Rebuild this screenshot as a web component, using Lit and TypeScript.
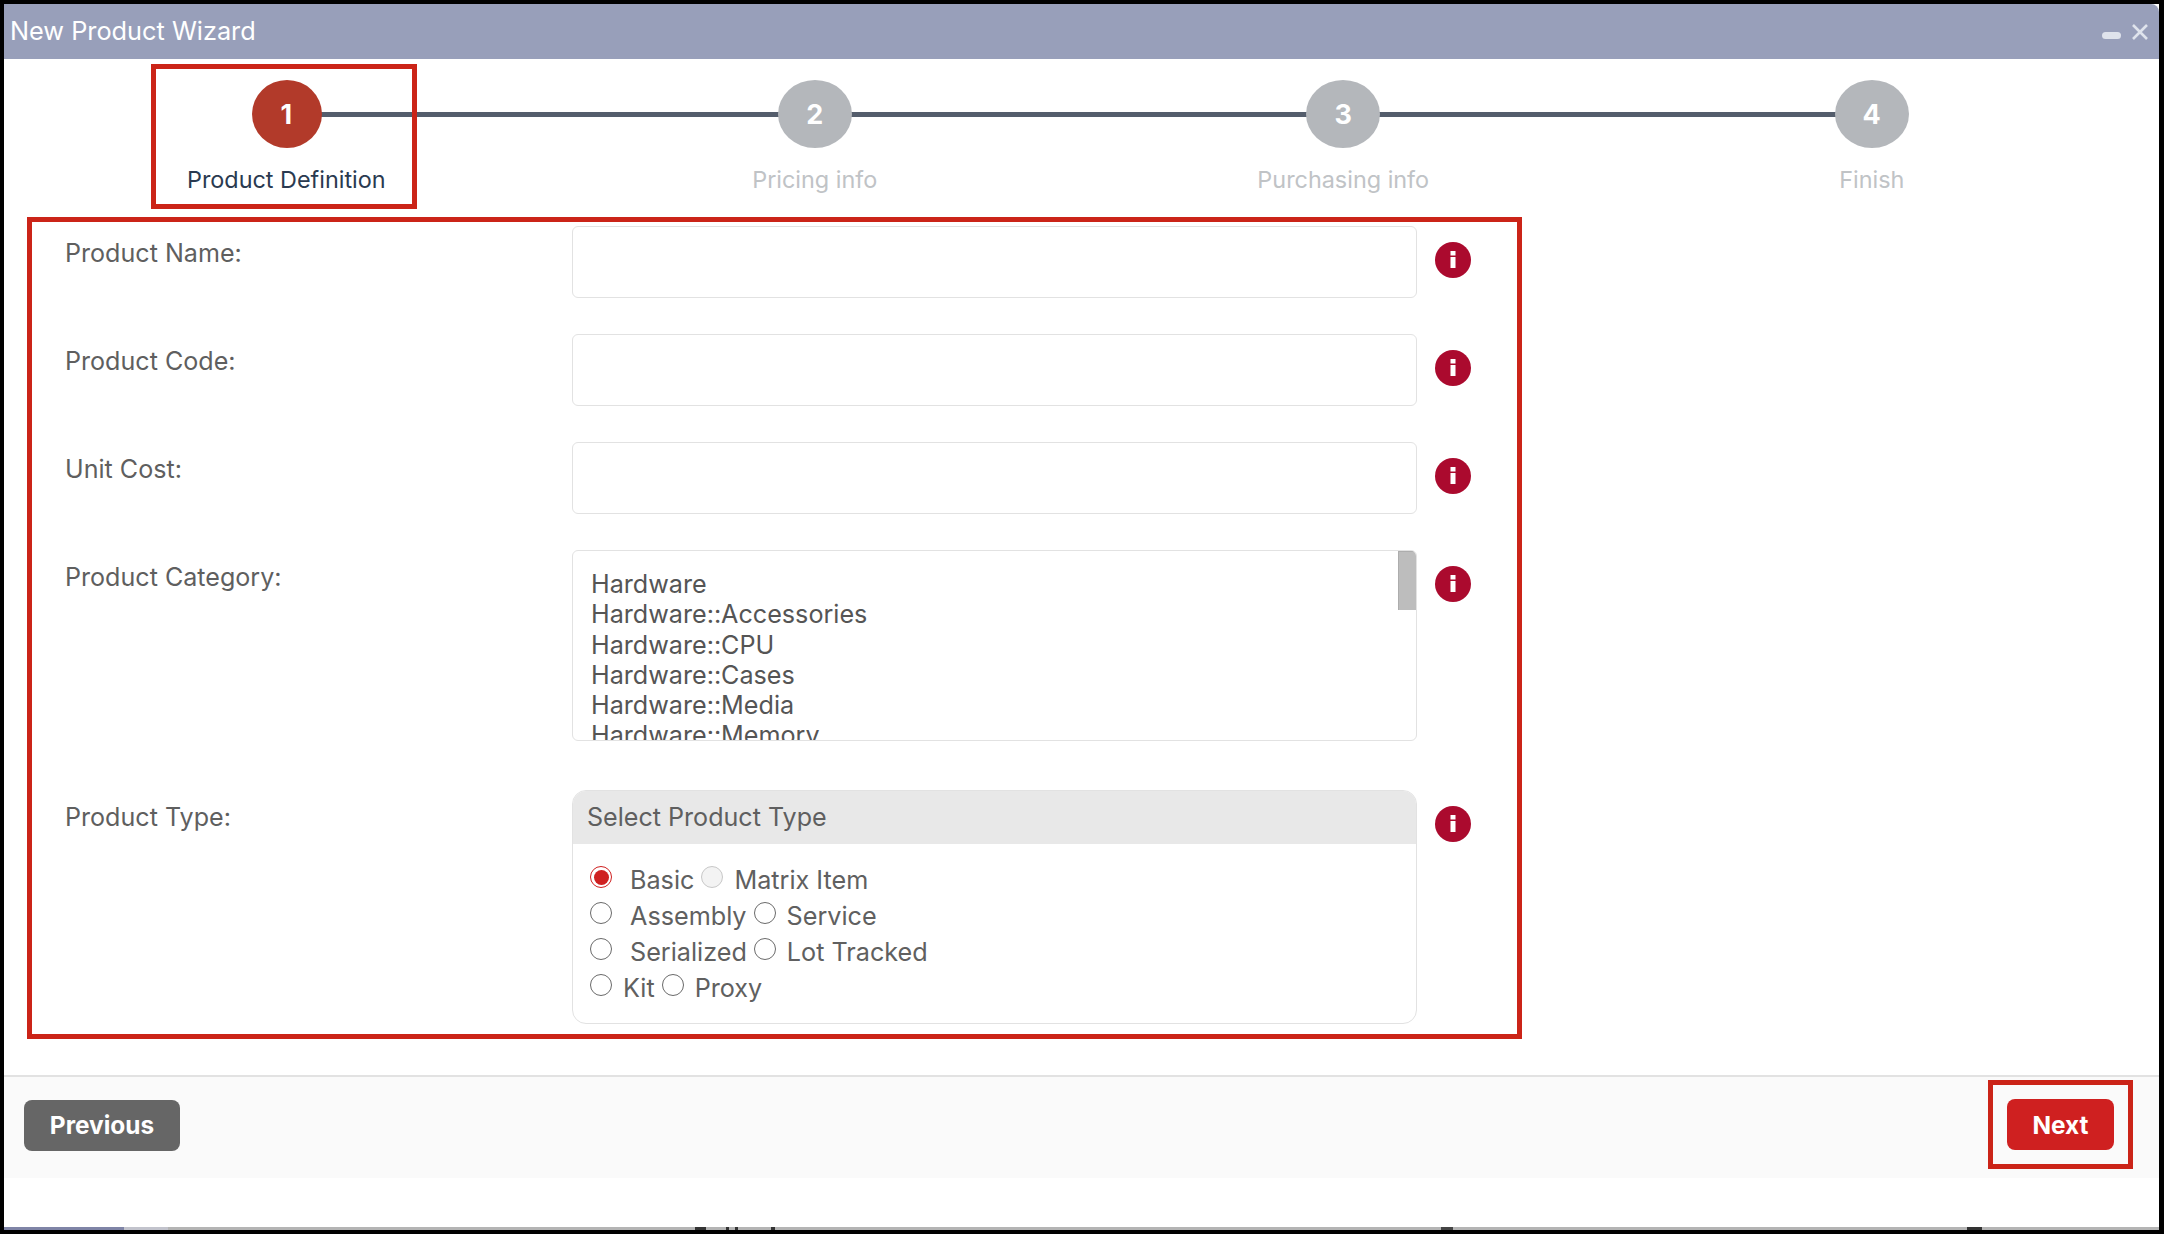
import { LitElement, html, css } from "lit";
import { customElement } from "lit/decorators.js";

const STEPS = ["Product Definition", "Pricing info", "Purchasing info", "Finish"];
const CATS = ["Hardware", "Hardware::Accessories", "Hardware::CPU", "Hardware::Cases", "Hardware::Media", "Hardware::Memory"];
const TEXT_ROWS = ["Product Name:", "Product Code:", "Unit Cost:"];
const RADIOS = [
  [["Basic", "on", true], ["Matrix Item", "dis", false]],
  [["Assembly", "", true], ["Service", "", false]],
  [["Serialized", "", true], ["Lot Tracked", "", false]],
  [["Kit", "", false], ["Proxy", "", false]],
] as [string, string, boolean][][];

@customElement("app-root")
export class AppRoot extends LitElement {
  static styles = css`
    :host { display: block; width: 2164px; height: 1234px; box-sizing: border-box; background: #000; padding: 4px 5px 4px 4px; font-family: Inter, "Liberation Sans", sans-serif; color: #5f5f5f; }
    * { box-sizing: border-box; }
    .win { height: 100%; background: #fff; display: flex; flex-direction: column; }
    .title { height: 55px; flex: none; background: #989fba; color: #fff; font-size: 25.3px; padding-left: 6px; display: flex; align-items: center; justify-content: space-between; padding-bottom: 2px; border-top-right-radius: 8px; }
    .ctl { display: flex; align-items: flex-start; gap: 11px; margin-right: 11px; }
    .ctl svg { display: block; }
    .min { margin-top: 11px; }
    .cls { margin-top: 3px; }
    .steps { display: grid; grid-template-columns: repeat(4, 528.5px); margin-left: 18px; height: 158px; padding-top: 21px; flex: none; }
    .step { position: relative; display: flex; flex-direction: column; align-items: center; }
    .line { position: absolute; left: 50%; width: 100%; top: 32px; height: 5px; background: #545d6c; }
    .dot { position: relative; width: 74px; height: 68px; border-radius: 50%; background: #b4b7bb; color: #fff; font-size: 27px; font-weight: 700; display: flex; align-items: center; justify-content: center; }
    .step.on .dot { width: 70px; background: #b23a2a; left: 1px; padding-right: 2px; }
    .lbl { font-size: 23.4px; color: #c0c3c6; position: absolute; top: 85px; white-space: nowrap; }
    .step.on .lbl { color: #2a3a50; }
    .mark { position: absolute; left: 129px; top: -16px; width: 266px; height: 145px; border: 5px solid #cb2418; }
    .form { width: 1495px; height: 822px; margin-left: 23px; border: 5px solid #cb2418; padding: 4px 0 0 33px; flex: none; display: flex; flex-direction: column; }
    .row { display: grid; grid-template-columns: 507px 845px 72px; }
    .row.t { height: 108px; }
    .row.c { height: 240px; }
    .row label { font-size: 25.1px; padding-top: 12.5px; line-height: 29px; }
    .input { height: 72px; border: 1px solid #e2e2e2; border-radius: 6px; background: #fff; }
    .i { width: 36px; height: 36px; margin: 16px 0 0 18px; display: block; }
    .list { height: 191px; border: 1px solid #e2e2e2; border-radius: 6px; position: relative; overflow: hidden; padding: 18px 18px 0; font-size: 25.15px; line-height: 30.3px; color: #555; }
    .thumb { position: absolute; right: 0; top: 0; width: 18px; height: 59px; background: #bdbdbd; border-left: 1px solid #adadad; border-top: 1px solid #adadad; }
    .panel { height: 234px; border: 1px solid #e2e2e2; border-radius: 14px; overflow: hidden; }
    .phead { height: 53px; background: #e8e8e8; font-size: 25.1px; padding: 11px 14px 0; line-height: 30px; }
    .pbody { padding: 18px 17px 0; font-size: 25.2px; color: #606060; }
    .rrow { height: 36px; display: flex; align-items: flex-start; line-height: 36px; white-space: nowrap; }
    .r { width: 22px; height: 22px; border-radius: 50%; border: 1.5px solid #6a6a6a; display: block; flex: none; margin-top: 4px; background: #fff; }
    .r.on { border: 1.5px solid #cf2020; position: relative; }
    .r.on::after { content: ""; position: absolute; inset: 2.5px; border-radius: 50%; background: #cf2020; }
    .r.dis { border-color: #c8c8c8; background: #f3f3f3; }
    .pair { display: flex; }
    .txt { margin-left: 11px; }
    .txt.far { margin-left: 18px; }
    .pair + .pair { margin-left: 7px; }
    .foot { margin-top: 36px; height: 103px; flex: none; background: #fafafa; border-top: 2px solid #e2e2e2; display: flex; align-items: flex-start; justify-content: space-between; padding: 23px 22px 0 20px; }
    .btn { height: 51px; border: none; border-radius: 8px; color: #fff; font: 700 24.4px Inter, "Liberation Sans", sans-serif; padding: 0; display: flex; align-items: center; justify-content: center; }
    .prev { width: 156px; background: #666; padding-bottom: 1px; }
    .next { width: 107px; background: #cf2020; }
    .nextbox { width: 145px; height: 89px; border: 5px solid #cb2418; margin: -20px 4px 0 0; display: flex; align-items: center; justify-content: center; }
    .spacer { flex: 1; }
    .strip { height: 3px; flex: none; background:
      linear-gradient(90deg, transparent 691px, #333 691px, #333 702px, transparent 702px, transparent 722px, #333 722px, #333 725px, transparent 725px, transparent 731px, #333 731px, #333 734px, transparent 734px, transparent 767px, #333 767px, #333 771px, transparent 771px, transparent 1437px, #444 1437px, #444 1449px, transparent 1449px, transparent 1963px, #333 1963px, #333 1978px, transparent 1978px),
      linear-gradient(90deg, #7f84a6 120px, #c2c3cc 120px, #c2c3cc 164px, #b4b4b4 164px); }
  `;

  info() {
    return html`<svg class="i" viewBox="0 0 36 36"><circle cx="18" cy="18" r="18" fill="#ab0a2e"/><rect x="15.5" y="15" width="5" height="11" fill="#fff"/><rect x="15.5" y="9" width="5" height="4.5" fill="#fff"/></svg>`;
  }

  render() {
    return html`<div class="win">
      <div class="title"><span>New Product Wizard</span>
        <span class="ctl">
          <svg class="min" width="19" height="7" viewBox="0 0 19 7"><rect width="19" height="7" rx="3.5" fill="#dfe3ec"/></svg>
          <svg class="cls" width="16" height="16" viewBox="0 0 16 16"><path d="M1 1 L15 15 M15 1 L1 15" stroke="#dfe3ec" stroke-width="2.6"/></svg>
        </span>
      </div>
      <div class="steps">
        ${STEPS.map((s, i) => html`<div class="step ${i === 0 ? "on" : ""}">
          ${i < 3 ? html`<div class="line"></div>` : ""}
          <div class="dot">${i + 1}</div>
          <div class="lbl">${s}</div>
          ${i === 0 ? html`<div class="mark"></div>` : ""}
        </div>`)}
      </div>
      <div class="form">
        ${TEXT_ROWS.map((l) => html`<div class="row t"><label>${l}</label><div class="input"></div>${this.info()}</div>`)}
        <div class="row c"><label>Product Category:</label>
          <div class="list">${CATS.map((c) => html`<div>${c}</div>`)}<div class="thumb"></div></div>
          ${this.info()}
        </div>
        <div class="row"><label>Product Type:</label>
          <div class="panel">
            <div class="phead">Select Product Type</div>
            <div class="pbody">
              ${RADIOS.map((row) => html`<div class="rrow">${row.map(([t, st, far]) => html`<span class="pair"><i class="r ${st}"></i><span class="txt ${far ? "far" : ""}">${t}</span></span>`)}</div>`)}
            </div>
          </div>
          ${this.info()}
        </div>
      </div>
      <div class="foot">
        <button class="btn prev">Previous</button>
        <div class="nextbox"><button class="btn next">Next</button></div>
      </div>
      <div class="spacer"></div>
      <div class="strip"></div>
    </div>`;
  }
}
